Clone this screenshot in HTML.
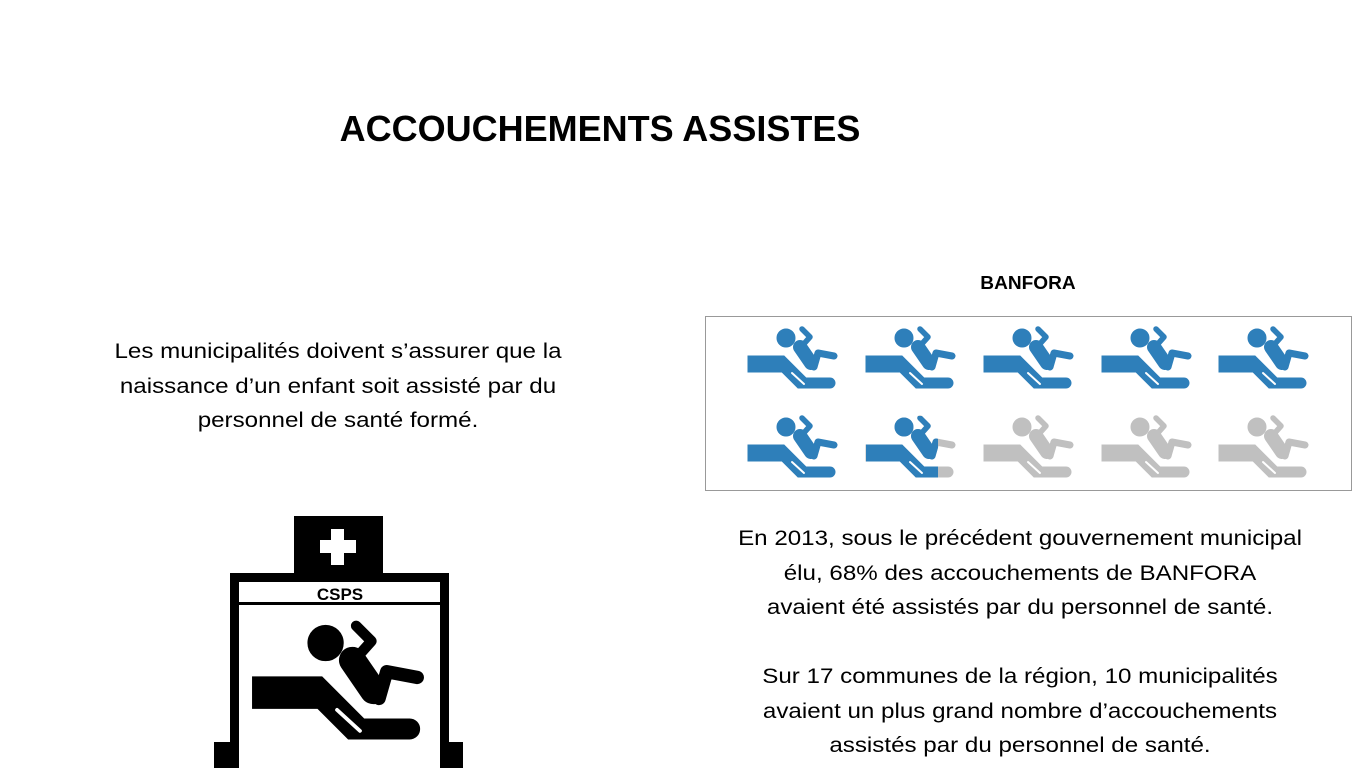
<!DOCTYPE html>
<html><head><meta charset="utf-8"><style>
body{margin:0;width:1366px;height:768px;background:#fff;position:relative;overflow:hidden;font-family:"Liberation Sans",Arial,sans-serif;color:#000}
.t{position:absolute;white-space:nowrap;text-align:center}
.w{transform:scaleX(1.15);transform-origin:center}
</style></head><body>
<svg width="0" height="0" style="position:absolute">
<defs>
<g id="ic">
<path d="M0,29 H36 L58,51 H82 A5,5 0 0 1 82,61 H50 L34,45 H0 Z"/>
<circle cx="38" cy="11" r="9"/>
<polyline points="54,2 62,10 54,19" fill="none" stroke-width="5.5" stroke-linecap="round" stroke-linejoin="round"/>
<line x1="52" y1="20" x2="63" y2="36" stroke-width="14" stroke-linecap="round"/>
<polyline points="66,40 70,26 86,29" fill="none" stroke-width="7" stroke-linecap="round" stroke-linejoin="round"/>
<line x1="44" y1="46" x2="56" y2="57" stroke="#fff" stroke-width="2" stroke-linecap="round"/>
</g>
<clipPath id="cp"><rect x="0" y="0" width="72" height="70"/></clipPath>
</defs>
</svg>
<div class="t" style="left:0;width:1200px;top:108px;font-size:36px;font-weight:bold;">ACCOUCHEMENTS ASSISTES</div>
<div class="t w" style="left:878px;width:300px;top:273px;font-size:18px;font-weight:bold;transform:scaleX(1.06)">BANFORA</div>
<div class="t w" style="left:88px;width:500px;top:335px;font-size:21px;line-height:34.5px;">Les municipalités doivent s’assurer que la<br>naissance d’un enfant soit assisté par du<br>personnel de santé formé.</div>
<div class="t w" style="left:720px;width:600px;top:522px;font-size:21px;line-height:34.5px;">En 2013, sous le précédent gouvernement municipal<br>élu, 68% des accouchements de BANFORA<br>avaient été assistés par du personnel de santé.<br><br>Sur 17 communes de la région, 10 municipalités<br>avaient un plus grand nombre d’accouchements<br>assistés par du personnel de santé.</div>
<div style="position:absolute;left:705px;top:316px;width:645px;height:173px;border:1px solid #999"></div>
<svg style="position:absolute;left:0;top:0" width="1366" height="768">
<g fill="#2e7fba" stroke="#2e7fba">
<use href="#ic" transform="translate(748,327)"/>
<use href="#ic" transform="translate(866,327)"/>
<use href="#ic" transform="translate(984,327)"/>
<use href="#ic" transform="translate(1102,327)"/>
<use href="#ic" transform="translate(1219,327)"/>
<use href="#ic" transform="translate(748,416)"/>
</g>
<g fill="#c0c0c0" stroke="#c0c0c0">
<use href="#ic" transform="translate(866,416)"/>
<use href="#ic" transform="translate(984,416)"/>
<use href="#ic" transform="translate(1102,416)"/>
<use href="#ic" transform="translate(1219,416)"/>
</g>
<g fill="#2e7fba" stroke="#2e7fba" transform="translate(866,416)" clip-path="url(#cp)"><use href="#ic"/></g>
<rect x="294" y="516" width="89" height="60" fill="#000"/>
<rect x="331" y="529" width="13" height="36" fill="#fff"/>
<rect x="320" y="540" width="36" height="13" fill="#fff"/>
<rect x="230" y="573" width="219" height="200" fill="#000"/>
<rect x="239" y="582" width="201" height="200" fill="#fff"/>
<rect x="239" y="602" width="201" height="3" fill="#000"/>
<text x="340" y="600" text-anchor="middle" font-family="Liberation Sans, sans-serif" font-weight="bold" font-size="17">CSPS</text>
<rect x="214" y="742" width="25" height="30" fill="#000"/>
<rect x="440" y="742" width="23" height="30" fill="#000"/>
<g fill="#000" stroke="#000" transform="translate(253,622) scale(1.91)"><use href="#ic"/></g>
</svg>
</body></html>
